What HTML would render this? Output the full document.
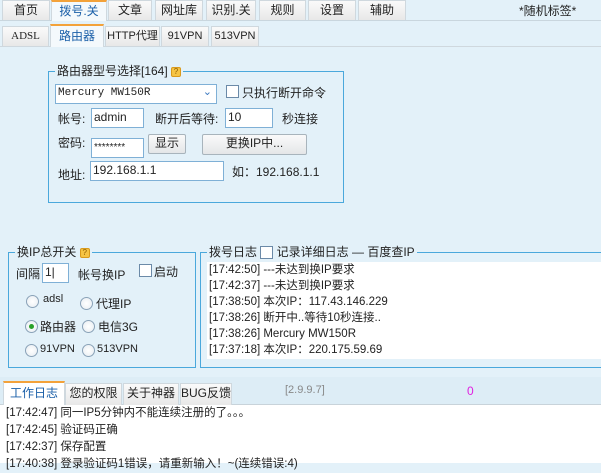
<!DOCTYPE html><html><head><meta charset="utf-8"><style>
*{margin:0;padding:0;box-sizing:border-box}
body{width:601px;height:463px;overflow:hidden;background:#e3f1f9;font-family:"Liberation Sans","Noto Sans CJK SC",sans-serif;font-size:12px;color:#222;position:relative}
.a{position:absolute;white-space:nowrap}
.tab{position:absolute;height:20px;background:linear-gradient(#fafafa,#e8e8e8);border:1px solid #cfd8de;border-bottom:none;text-align:center;line-height:19px;font-size:12px;color:#222}
.tab.on{background:#f4f9fc;color:#1a5fa8;border-top:2px solid #f3a23a}
.box{position:absolute;border:1px solid #4aa8dc}
.lg{position:absolute;background:#e3f1f9;padding:0 2px;top:-9px;line-height:16px;white-space:nowrap}
.in{position:absolute;background:#fff;border:1px solid #7fb0d6;line-height:17px;padding-left:2px;font-size:12px}
.btn{position:absolute;border:1px solid #a8b4bc;border-radius:2px;background:linear-gradient(#fafafa,#e4e6e8);text-align:center;line-height:17px}
.cb{position:absolute;width:13px;height:13px;border:1px solid #6b8aa8;background:#fff}
.rd{position:absolute;width:13px;height:13px;border:1px solid #8aa2b8;border-radius:50%;background:radial-gradient(#fff,#e6ecf1)}
.q{display:inline-block;width:10px;height:10px;background:#f6c444;border:1px solid #d99a1c;border-radius:2px;font-size:8px;line-height:8px;text-align:center;color:#8a5a00;vertical-align:middle}
.log div{height:16px;line-height:16px}
</style></head><body>
<div class="a" style="left:0;top:20px;width:601px;height:1px;background:#c9d6de"></div>
<div class="tab" style="left:2px;top:0;width:48px">首页</div>
<div class="tab on" style="left:51px;top:0;width:56px;height:21px">拨号.关</div>
<div class="tab" style="left:108px;top:0;width:44px">文章</div>
<div class="tab" style="left:155px;top:0;width:48px">网址库</div>
<div class="tab" style="left:206px;top:0;width:50px">识别.关</div>
<div class="tab" style="left:259px;top:0;width:47px">规则</div>
<div class="tab" style="left:308px;top:0;width:48px">设置</div>
<div class="tab" style="left:358px;top:0;width:48px">辅助</div>
<div class="a" style="left:519px;top:2px;font-size:12px">*随机标签*</div>
<div class="a" style="left:0;top:46px;width:601px;height:1px;background:#cfd8de"></div>
<div class="tab" style="left:2px;top:26px;width:47px;font-family:'Liberation Serif',serif;font-size:11px">ADSL</div>
<div class="tab on" style="left:50px;top:24px;width:54px;height:23px;line-height:20px">路由器</div>
<div class="tab" style="left:105px;top:26px;width:55px;font-size:11px">HTTP代理</div>
<div class="tab" style="left:161px;top:26px;width:48px;font-size:11px">91VPN</div>
<div class="tab" style="left:211px;top:26px;width:48px;font-size:11px">513VPN</div>

<div class="box" style="left:48px;top:71px;width:296px;height:132px">
<div class="lg" style="left:6px">路由器型号选择[164] <span class="q">?</span></div></div>
<div class="in" style="left:55px;top:84px;width:162px;height:20px;font-family:'Liberation Mono',monospace;font-size:11px">Mercury MW150R<span style="position:absolute;right:4px;top:0;color:#3a78c0">⌄</span></div>
<div class="cb" style="left:226px;top:85px"></div><div class="a" style="left:242px;top:84px">只执行断开命令</div>
<div class="a" style="left:58px;top:110px">帐号:</div>
<div class="in" style="left:91px;top:108px;width:53px;height:20px">admin</div>
<div class="a" style="left:155px;top:110px">断开后等待:</div>
<div class="in" style="left:225px;top:108px;width:48px;height:20px">10</div>
<div class="a" style="left:282px;top:110px">秒连接</div>
<div class="a" style="left:58px;top:134px">密码:</div>
<div class="in" style="left:91px;top:138px;width:53px;height:20px;font-size:10px">********</div>
<div class="btn" style="left:148px;top:134px;width:38px;height:20px">显示</div>
<div class="btn" style="left:202px;top:134px;width:105px;height:21px">更换IP中...</div>
<div class="a" style="left:58px;top:166px">地址:</div>
<div class="in" style="left:90px;top:161px;width:134px;height:20px">192.168.1.1</div>
<div class="a" style="left:232px;top:163px">如：192.168.1.1</div>

<div class="box" style="left:8px;top:252px;width:188px;height:116px">
<div class="lg" style="left:6px">换IP总开关 <span class="q">?</span></div></div>
<div class="a" style="left:16px;top:265px">间隔</div>
<div class="in" style="left:42px;top:263px;width:27px;height:20px">1|</div>
<div class="a" style="left:78px;top:266px">帐号换IP</div>
<div class="cb" style="left:139px;top:264px"></div><div class="a" style="left:154px;top:263px">启动</div>
<div class="rd" style="left:26px;top:295px"></div><div class="a" style="left:43px;top:293px;font-size:11px">adsl</div>
<div class="rd" style="left:80px;top:297px"></div><div class="a" style="left:96px;top:295px">代理IP</div>
<div class="rd" style="left:25px;top:320px"><div style="width:5px;height:5px;border-radius:50%;background:#2aa12a;margin:3px"></div></div><div class="a" style="left:40px;top:318px">路由器</div>
<div class="rd" style="left:82px;top:320px"></div><div class="a" style="left:98px;top:318px">电信3G</div>
<div class="rd" style="left:25px;top:344px"></div><div class="a" style="left:40px;top:343px;font-size:11px">91VPN</div>
<div class="rd" style="left:82px;top:344px"></div><div class="a" style="left:97px;top:343px;font-size:11px">513VPN</div>

<div class="box" style="left:200px;top:252px;width:410px;height:116px;border-right:none">
<div class="lg" style="left:6px">拨号日志 <span class="cb" style="position:relative;display:inline-block;vertical-align:middle;top:0;left:0"></span> 记录详细日志 — 百度查IP</div></div>
<div class="a log" style="left:207px;top:262px;width:394px;height:97px;background:#fff;padding-left:2px;font-size:11.5px">
<div>[17:42:50] ---未达到换IP要求</div><div>[17:42:37] ---未达到换IP要求</div><div>[17:38:50] 本次IP：117.43.146.229</div><div>[17:38:26] 断开中..等待10秒连接..</div><div>[17:38:26] Mercury MW150R</div><div>[17:37:18] 本次IP：220.175.59.69</div></div>

<div class="a" style="left:0;top:377px;width:601px;height:28px;background:#ddedf6;border-bottom:1px solid #c8d3da"></div>
<div class="tab on" style="left:3px;top:381px;width:62px;height:24px;line-height:21px;background:#fff">工作日志</div>
<div class="tab" style="left:65px;top:383px;width:57px;height:22px">您的权限</div>
<div class="tab" style="left:123px;top:383px;width:56px;height:22px">关于神器</div>
<div class="tab" style="left:180px;top:383px;width:52px;height:22px">BUG反馈</div>
<div class="a" style="left:285px;top:384px;color:#888;font-size:11px">[2.9.9.7]</div>
<div class="a" style="left:467px;top:384px;color:#e020e0">0</div>
<div class="a log" style="left:0;top:405px;width:601px;height:58px;background:#fff;padding-left:6px;font-size:11.5px;line-height:17px">
<div style="height:17px">[17:42:47] 同一IP5分钟内不能连续注册的了。。。</div><div style="height:17px">[17:42:45] 验证码正确</div><div style="height:17px">[17:42:37] 保存配置</div><div style="height:17px">[17:40:38] 登录验证码1错误，请重新输入！~(连续错误:4)</div></div>
</body></html>
